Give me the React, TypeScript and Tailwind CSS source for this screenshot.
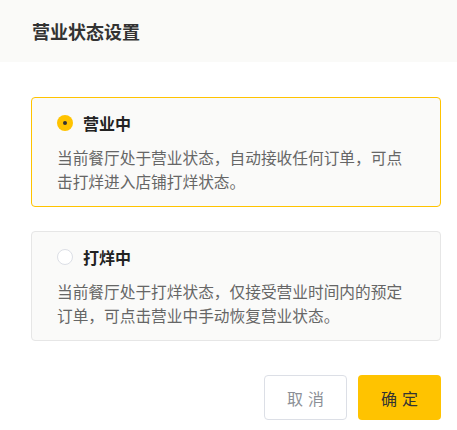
import React from "react";

const font = { fontFamily: '"Noto Sans CJK SC", "Noto Sans", sans-serif' };

function Option({ selected, title, desc }: { selected: boolean; title: string; desc: string }) {
  return (
    <div
      className={`w-[410px] h-[110px] rounded-[4px] border bg-[#fafaf9] pl-[25px] pr-[30px] pt-[12px] ${
        selected ? "border-[#ffc300]" : "border-[#e6e6e6]"
      }`}
    >
      <div className="flex items-center gap-[10px] h-[26px]">
        {selected ? (
          <span className="w-[16px] h-[16px] rounded-full bg-[#ffc300] flex items-center justify-center">
            <span className="w-[4px] h-[4px] rounded-full bg-[#333]" />
          </span>
        ) : (
          <span className="w-[16px] h-[16px] rounded-full bg-white border border-[#dcdfe6]" />
        )}
        <span className="text-[16px] font-bold text-[#222] leading-[26px]">{title}</span>
      </div>
      <p className="mt-[10px] text-[15.7px] leading-[23.5px] text-[#666]">{desc}</p>
    </div>
  );
}

export default function App() {
  return (
    <div className="w-[457px] h-[430px] bg-white" style={font}>
      <div className="h-[62px] bg-[#fafaf8] flex items-center px-[32px]">
        <h1 className="text-[18px] font-bold text-[#333] leading-[26px]">营业状态设置</h1>
      </div>
      <div className="pl-[31px] pt-[35px] flex flex-col gap-[24px]">
        <Option
          selected
          title="营业中"
          desc="当前餐厅处于营业状态，自动接收任何订单，可点击打烊进入店铺打烊状态。"
        />
        <Option
          selected={false}
          title="打烊中"
          desc="当前餐厅处于打烊状态，仅接受营业时间内的预定订单，可点击营业中手动恢复营业状态。"
        />
      </div>
      <div className="flex justify-end gap-[11px] pr-[16px] mt-[34px]">
        <button className="w-[83px] h-[45px] rounded-[4px] border border-[#dcdfe6] bg-white text-[16px] text-[#8c8f96] tracking-[5px] pl-[5px]">
          取消
        </button>
        <button className="w-[83px] h-[45px] rounded-[4px] bg-[#ffc300] text-[16px] text-[#333] tracking-[5px] pl-[5px]">
          确定
        </button>
      </div>
    </div>
  );
}
